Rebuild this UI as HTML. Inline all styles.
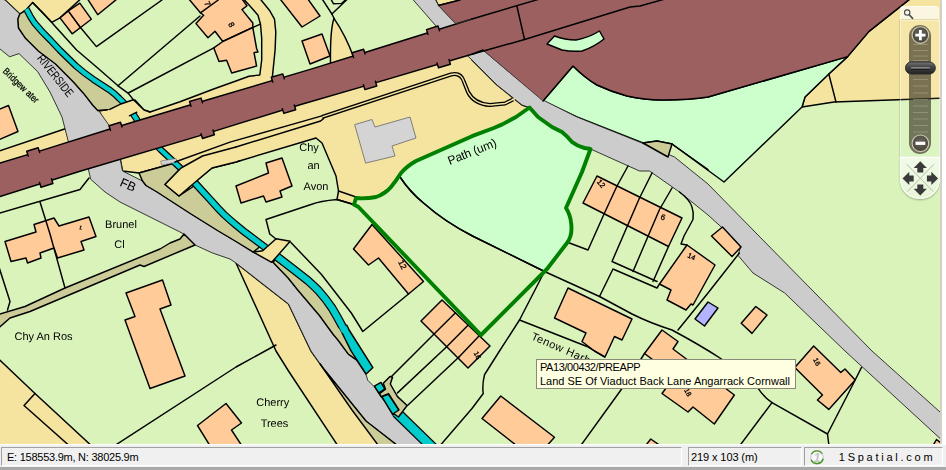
<!DOCTYPE html>
<html><head><meta charset="utf-8"><title>Map</title>
<style>
html,body{margin:0;padding:0;background:#fff;}
body{width:946px;height:470px;overflow:hidden;position:relative;font-family:"Liberation Sans",sans-serif;}
#map{position:absolute;left:0;top:0;width:940px;height:444px;display:block;will-change:transform;}
#edge{position:absolute;left:940px;top:0;width:2px;height:444px;background:#d4d0c8;}
#status{position:absolute;left:0;top:444px;width:946px;height:26px;background:#f0f0f0;border-top:1px solid #fff;box-sizing:border-box;border-bottom:3px solid #a9a9a9;}
.pan{position:absolute;top:2px;height:19px;box-sizing:border-box;border:1px solid;border-color:#a0a0a0 #fff #fff #a0a0a0;font-size:11px;line-height:19px;color:#000;white-space:nowrap;}
#tip{position:absolute;left:536px;top:359px;width:260px;height:30px;box-sizing:border-box;background:#ffffe1;border:1px solid #8a8a7a;font-size:11px;line-height:14px;padding:0 0 0 3px;color:#000;white-space:nowrap;}
#ctl{position:absolute;left:899px;top:6px;width:41px;}
#srch{position:absolute;left:1px;top:0;width:39px;height:14px;background:#fbf6e2;border:1px solid #fdfaf0;border-bottom:1px solid #e0d5a5;box-sizing:border-box;border-radius:3.5px 3.5px 0 0;}
#sld{position:absolute;left:0.5px;top:14px;width:40px;height:137px;box-sizing:border-box;background:rgba(255,255,255,0.10);border:1px solid rgba(255,255,255,0.42);box-shadow:-1px 0 0 rgba(130,110,50,0.22);}
#trk{position:absolute;left:8.6px;top:4px;width:22px;height:129px;border-radius:11px;background:rgba(62,58,42,0.68);}
#pn{position:absolute;left:0.5px;top:151px;width:40px;height:41.5px;box-sizing:border-box;background:linear-gradient(rgba(248,252,244,0.8),rgba(236,246,226,0.75));border:1px solid rgba(255,255,255,0.85);border-radius:0 0 19.5px 19.5px;box-shadow:0 1px 2px rgba(0,0,0,0.3);}
#map text{font-family:"Liberation Sans",sans-serif;fill:#000;text-rendering:geometricPrecision;}
svg text{font-family:"Liberation Sans",sans-serif;}
</style></head><body>
<svg id="map" width="940" height="444" viewBox="0 0 940 444">
<rect x="-5" y="-5" width="950" height="454" fill="#d9f3bb" stroke="none"/>
<g stroke="#000" stroke-width="1.45" stroke-linejoin="round" stroke-linecap="round">
<polygon points="-5,-5 85,-5 60,17.9 51.7,22.3 32.6,2.6 24.9,10.9 19.8,14 5,0 -5,-3" fill="#f5e4a0" />
<polygon points="-5,152.5 67.5,128 72,150 -5,172" fill="#f5e4a0" />
<polygon points="99,111 109.8,109.4 118,105 135,100 144,110 150,112 180,101.7 215,88.5 236,81 249,76.2 259.8,75 261.7,60 261.7,38.3 260.5,24.3 258,15.3 251.5,7.7 240,-5 257,-5 269.4,10.2 274.5,19.2 275.8,32 275.1,50 272,80.6 272,90 110,135" fill="#f5e4a0" />
<path d="M334,18.3 Q330,30 330.5,64 L353.5,57 Q346,36 334,18.3Z" fill="#f5e4a0" />
<polygon points="433,-5 438.5,5.5 460,0 462,-5" fill="#f5e4a0" />
<polygon points="120,158 468,50 472,60 497,85 522,105 529.5,107.5 516,117 502.3,124.4 493.8,128 472,136.2 416,161 401,173 391,187 376,197 356,198 354,204.5 337,199.5 338.5,191 336,176 322,143 316,138 236,162 212,168 200,178 179,196 165,184.5 181,168 175,163 139,173 122.5,171" fill="#f5e4a0" />
<polygon points="847.6,56.6 869,31.4 915,-5 945,-5 945,98 834,102 802,107 805,97 828.8,74" fill="#f5e4a0" />
<polygon points="236,263 288.5,304 311,351 323.5,368.5 385,449 340,449 288.5,371 276,351" fill="#f5e4a0" />
<polygon points="-5,355.5 35,393.5 95,449 -5,449" fill="#f5e4a0" />
<path d="M573,66 Q585,78 597,85 Q612,92 627,96 Q645,100 662,100 Q690,100 708,97 L847.6,56.6 L828.8,74 L805,97 L802,107 L724,182 L672,144 L657,141 L643,143 L577,117 L543,101Z" fill="#ccffcc" />
<path d="M529.5,107.5 L516,117 L502.3,124.4 L493.8,128 L472,136.2 L416,161 L401,173 L400,177 Q410,192 423.5,203 Q445,222 472.5,236 L544.5,271.5 L547,269 L567,243 L572,234 L571,222 L566,208 L582,172 L590.5,149 L584.5,148 L572,142 L562,132 L552,127 L538,117Z" fill="#ccffcc" />
<path d="M433,-5 L438.5,5.5 L456,24 L483,50 L509.5,72.5 L543,100 L577,117 L642,143 L674.5,157 L708,184 L757,234 L872,351 L945,416.5 L945,443 L845,351 L784.7,293 L753,273 L738,255.4 L740.7,246.6 L729,234 L708,215 L679.5,192 L649.5,171 L639.5,171 L590.5,149 L584.5,148 L572,142 L562,132 L552,127 L538,117 L529.5,107.5 L522,105 L497,85 L472,60 L436,26 L409,-5Z" fill="#cccccc" stroke="#222" stroke-width="0.9"/>
<path d="M-5,-3 L5,0 L19.8,14 L17.9,19 L18.5,28 L25.5,38.3 L38.3,51 L55.5,64 L73.4,82 L83.6,93.4 L92.6,105 L97.7,110.5 L99,111 L109.4,125.8 L112,135 L70,148 L62,117 L50,92 L37.7,71.7 L19,53.6 L9.6,56.8 L0,49 L-5,45Z" fill="#cccccc" stroke="#222" stroke-width="0.9"/>
<path d="M88,166 L120,158 L122.5,171 L142.5,181 L146,185.5 L157,192 L191,214 L218.3,231 L236,241.5 L253.2,252.1 L273,262.3 L288.3,278.3 L297.7,290 L319.4,315.5 L333.4,334.7 L337.9,340 L348.3,354.1 L355.7,359.4 L366.2,375 L367.7,380.2 L374.4,386.9 L379.6,395.1 L385.5,402.6 L396,417 L427,449 L402,449 L366,421 L323.5,368.5 L311,351 L288.5,304 L236,263 L230,259 L212.5,253 L195,245 L184,234 L150,217 L120,202 L105,192 L91,179.5Z" fill="#cccccc" stroke="#222" stroke-width="0.9"/>
<polygon points="19.8,14 24.9,10.9 34.5,23 51,40.8 59.6,50 76,66 93.2,79.3 109,89.6 119.4,98.5 124,104 109.8,109.4 97.7,110.5 92.6,105 83.6,93.4 73.4,82 55.5,64 38.3,51 25.5,38.3 18.5,28 17.9,19" fill="#cccc99" />
<polygon points="139,173 175,163 181,168 165,184.5 179,196 196.3,184.5 211,200.5 224,214.5 236,225 245.5,232.7 262,245 253.2,252.1 236,241.5 218.3,231 191,214 157,192 146,185.5 142.5,181" fill="#cccc99" />
<polygon points="273,262.3 277.8,257.2 293.4,269.3 308.1,280.8 318.3,290.4 332,308 343,328 352.5,347 360,362 355.7,359.4 348.3,354.1 337.9,340 333.4,334.7 319.4,315.5 297.7,290 288.3,278.3" fill="#cccc99" />
<polygon points="320,363.8 323.5,368.5 366,421 402,449 381,449 352,410" fill="#cccc99" />
<polygon points="-5,315.5 25,306.5 65,288 160,249 170,243 180,239 184,234 195,245 144,266.5 140,265 30,311.5 10,318 -5,331" fill="#cccc99" />
<polygon points="643,143 657,141 672,144 668,157" fill="#cccc99" />
<path d="M26.4,9 Q30.5,17.5 34.5,23 Q42,32 51,40.8 L59.6,50 L76,66 Q84,73 93.2,79.3 L109,89.6 Q115,94 119.4,98.5 Q127,105 133.3,114 L141.5,127" fill="none" stroke="#000" stroke-width="6.8" stroke-linecap="butt"/>
<path d="M26.4,9 Q30.5,17.5 34.5,23 Q42,32 51,40.8 L59.6,50 L76,66 Q84,73 93.2,79.3 L109,89.6 Q115,94 119.4,98.5 Q127,105 133.3,114 L141.5,127" fill="none" stroke="#00cccc" stroke-width="4.4" stroke-linecap="butt"/>
<path d="M154,142.5 L160.5,149.5 L181.5,169 L198,186.5" fill="none" stroke="#000" stroke-width="6.8" stroke-linecap="butt"/>
<path d="M154,142.5 L160.5,149.5 L181.5,169 L198,186.5" fill="none" stroke="#00cccc" stroke-width="4.4" stroke-linecap="butt"/>
<path d="M181.5,169 L196.3,184.5 L211,200.5 Q218,208.5 224,214.5 Q230,220 236,225 L245.5,232.7 L262,245 L266,248" fill="none" stroke="#000" stroke-width="7.7" stroke-linecap="butt"/>
<path d="M181.5,169 L196.3,184.5 L211,200.5 Q218,208.5 224,214.5 Q230,220 236,225 L245.5,232.7 L262,245 L266,248" fill="none" stroke="#00cccc" stroke-width="5.3" stroke-linecap="butt"/>
<path d="M268,250.5 L277.8,257.2 L293.4,269.3 L308.1,280.8 Q314,286 318.3,290.4 Q326,299 332,308 Q338,318 342.4,326.6" fill="none" stroke="#000" stroke-width="8.8" stroke-linecap="butt"/>
<polygon points="338.2,325.3 340.6,330 351.3,351.3 366.2,374.1 372.9,367.6 349.1,330 346.9,325.3" fill="#00cccc" />
<path d="M268,250.5 L277.8,257.2 L293.4,269.3 L308.1,280.8 Q314,286 318.3,290.4 Q326,299 332,308 Q338,318 342.4,326.6 L344.8,331.5" fill="none" stroke="#00cccc" stroke-width="6.4" stroke-linecap="butt"/>
<path d="M396.5,412.5 L434,449" fill="none" stroke="#000" stroke-width="11" stroke-linecap="butt"/>
<path d="M396.5,412.5 L434,449" fill="none" stroke="#00cccc" stroke-width="8.6" stroke-linecap="butt"/>
<polygon points="374.4,386.2 381,382.4 384.8,389.2 378.8,392.9" fill="#00cccc" />
<polygon points="381.8,396.6 388.5,394.4 399,410 393,415" fill="#00cccc" />
<polygon points="383.3,383.2 390,376.5 392.5,377.2 390.3,384 397.5,396.6 407.1,405.5 398.5,417 393.5,413.5 399,410 388.5,393.6 381,396.6 379.6,393.6 385.5,389.2" fill="#cccc99" />
<polygon points="108,110 120,104.3 133.4,99.8 144,110 150,112 136.2,112.4 129.8,115.6 116,121 110,118" fill="#f5e4a0" stroke="none"/>
<path d="M136.8,112.2 L129.4,115.8" fill="none" />
<path d="M109.8,109.4 L120,104.3 L133.4,99.8 L144,110 L150,112" fill="none" />
<polygon points="181,168 202.5,156 238,145.4 238,161.4 212,168 200,178 179,196 165,184.5" fill="#f5e4a0" stroke="none"/>
<path d="M240,160.8 L236,162 L212,168 L200,178 L179,196 L165,184.5 L181,168 L202.5,156 L236,147" fill="none" />
<polygon points="253.2,252.1 262.7,250.8 276.1,238.7 290.2,241.3 271.7,262.3" fill="#f5e4a0" />
<polygon points="161,161 176,158.5 177,162 162,165" fill="#d2d2d2" stroke="#666" stroke-width="0.6"/>
<path d="M-5,164.6 L0,163.1 L41,150.6 L110,129 L200,102 L310.2,69.4 L366.4,52 L472,19 L456,24 L438.5,5.5 L460,0 L462,-5 L915,-5 L869,31.4 L847.6,56.6 L708,97 Q690,100 662,100 Q645,100 627,96 Q612,92 597,85 Q585,78 573,66 L543,101 L509.5,72.5 L483,50 L472,54.3 L363.4,86.4 L300,104.7 L200,135.6 L80,171.3 L0,196.6 L-5,198.2Z" fill="#9c6060" stroke="none"/>
<path d="M-5,164.6 L0,163.1 L41,150.6 L110,129 L200,102 L310.2,69.4 L366.4,52 L472,19" fill="none" />
<path d="M483,50 L472,54.3 L363.4,86.4 L300,104.7 L200,135.6 L80,171.3 L0,196.6 L-5,198.2" fill="none" />
<path d="M438.5,5.5 L460,0 L462,-5 M915,-5 L869,31.4 L847.6,56.6 L708,97 Q690,100 662,100 Q645,100 627,96 Q612,92 597,85 Q585,78 573,66 L543,101" fill="none" />
<path d="M472,19 L456,24 L438.5,5.5 M543,101 L509.5,72.5 L483,50" fill="none" stroke="#333" stroke-width="0.8"/>
<path d="M28.2,156.1 L26.7,151.3 L38.2,147.8 L39.7,152.6" fill="#9c6060" />
<path d="M110.5,130.4 L109.0,125.7 L120.5,122.2 L122.0,127.0" fill="#9c6060" />
<path d="M191.0,106.3 L189.5,101.5 L201.0,98.1 L202.5,102.9" fill="#9c6060" />
<path d="M272.8,82.1 L271.3,77.3 L282.8,73.9 L284.3,78.7" fill="#9c6060" />
<path d="M353.6,57.6 L352.1,52.8 L363.6,49.2 L365.1,54.0" fill="#9c6060" />
<path d="M428.0,34.4 L426.5,29.6 L438.0,26.0 L439.5,30.8" fill="#9c6060" />
<path d="M39.5,182.5 L41.0,187.3 L52.9,183.5 L51.5,178.7" fill="#9c6060" />
<path d="M201.0,133.7 L202.5,138.5 L214.4,134.8 L213.0,130.0" fill="#9c6060" />
<path d="M282.3,108.6 L283.8,113.4 L295.7,109.7 L294.3,104.9" fill="#9c6060" />
<path d="M363.4,84.8 L364.9,89.6 L376.8,86.0 L375.4,81.3" fill="#9c6060" />
<path d="M437.0,63.0 L438.5,67.8 L450.4,64.3 L449.0,59.5" fill="#9c6060" />
<path d="M472,19.0 L543,-2" fill="none" />
<path d="M517,6.5 L524.5,39.5" fill="none" />
<path d="M472,54.3 L524.5,39.5 L630,7 L640,6 L665,-1" fill="none" />
<path d="M547,44 L554.5,36 Q565,40 576,40 Q588,38 599.5,31 L604,39 Q594,47 582,51 Q572,52 562,50Z" fill="#ccffcc" />
<text transform="translate(530.6,339) rotate(23.5)" font-size="11" stroke="none" textLength="80.5" lengthAdjust="spacing">Tenow Harbour</text>
<polygon points="60,17.9 68.3,10.9 80.5,27.5 72.2,33.8" fill="#ffcc99" />
<polygon points="68.3,10.9 79.8,3.2 91.3,19.2 80.5,27.5" fill="#ffcc99" />
<polygon points="85,-5 97.7,14.7 119.5,-3" fill="#ffcc99" />
<polygon points="185.5,-5 200.4,12.8 203.6,15.3 196,23.6 208,37.7 215,31.3 222.8,41.5 252.8,27.5 252.8,23 242,9.6 247,5.7 239,-5" fill="#ffcc99" />
<polygon points="213.8,47.9 222.8,41.5 252.8,27.5 256.6,48.5 258,52 254,52.6 256.6,66 231.7,73 226.6,60.2 219,61.5" fill="#ffcc99" />
<polygon points="277,-5 302,27 320,16 305,-5" fill="#ffcc99" />
<polygon points="302,41 322,34 330,56 310,64" fill="#ffcc99" />
<polygon points="-5,111 8.5,105.5 18,131.5 -5,141.5" fill="#ffcc99" />
<polygon points="34,224.5 54,218 59,226 89,217 96,236.5 81,241.5 84,250 57.5,258 54,248 40,253 41,258 27.5,263 26,258 11,261.5 5,241.5 36,232" fill="#ffcc99" />
<polygon points="236,186 268.5,173 266,163 282,158 292,186 280,191 282,197 266,202 263.5,196 241,203" fill="#ffcc99" />
<polygon points="126,293 162.5,280 171,305 160,309 185,376 150,388.5 125,320 135,316.5" fill="#ffcc99" />
<polygon points="197.5,425.5 226,403.5 241.5,423 231.5,430 244,449 212,449" fill="#ffcc99" />
<polygon points="353.5,249 372,224.5 423.5,281.5 408.5,294 378.5,258 368.5,265" fill="#ffcc99" />
<polygon points="442,300 490,346 468,368 421,321" fill="#ffcc99" />
<polygon points="597,176 682,218 668.5,246.5 583,203" fill="#ffcc99" />
<polygon points="687,245 715,265 693,305 691,304 686,310 667,300 671,290 659.5,284" fill="#ffcc99" />
<polygon points="711.5,236 722.5,227 741,247 732,256.5" fill="#ffcc99" />
<polygon points="755.8,306.5 767,315 752,333.4 741.2,323.3" fill="#ffcc99" />
<polygon points="568,288 632,319 622,340 614.5,336.5 605,357 594.5,351 582,341.5 586,333 554.5,318" fill="#ffcc99" />
<polygon points="662,330 678,341.5 673,349 734.4,395 714.3,424 693,407 688,412 662,393.5 675,376.3 644.5,353.5" fill="#ffcc99" />
<polygon points="813.7,346 794.8,367.4 822.5,395 817.4,400 828.8,409.4 855.2,380 845,369 840.8,372.4" fill="#ffcc99" />
<polygon points="482,418.5 500.75,396 554.5,437.25 544,449 521,449" fill="#ffcc99" />
<polygon points="643,449 650.75,439 665,449" fill="#ffcc99" />
<polygon points="931,449 936.5,439.5 941,443 941,449" fill="#ffcc99" />
<polygon points="695,319 708,302 718,308 704.5,326" fill="#b3b3ff" />
<polygon points="355,124.5 372,119.5 375,127 410,117 416,138 392,146 395,156 366,163" fill="#d4d4d4" stroke="#666" stroke-width="0.8"/>
<path d="M32.6,2.6 L44,14 L76.6,50 L97.7,68 L118,85.8 L128.3,93.4 L133.4,99.8" fill="none" />
<path d="M80.5,27.5 L96.4,46.6 L162,0" fill="none" />
<path d="M118,85.8 L200,16" fill="none" />
<path d="M128.3,93 L213.8,47.9" fill="none" />
<path d="M252.8,27.5 L259.8,24.3" fill="none" />
<path d="M200.4,12.8 L218.3,0" fill="none" />
<path d="M321.5,-2 L331.9,14 L334,18.3" fill="none" />
<path d="M331.9,14 L348,-1.5" fill="none" />
<path d="M330.5,-1.5 L333.6,3.8 L341.7,3.4 L347,-1.5" fill="none" />
<path d="M-2,213.5 L80,189.5 L89,178" fill="none" />
<path d="M40,202 L50,234 L65,288" fill="none" />
<path d="M-2,264 L10,301.5 L7.5,310" fill="none" />
<path d="M353.5,204.5 L337,199.5 Q320,201 311,204.5 L266,219.5 L269.75,234 L276,239" fill="none" />
<path d="M338.5,191 L356,197" fill="none" />
<path d="M400,177 Q410,192 423.5,203 Q445,222 472.5,236 L544.5,271.5 L599.5,296.5 L632,314 Q650,323 672,330 Q700,345 720.7,358.5 L758.3,388.7 Q764,397 772,402.6 L827.5,434 L829,446" fill="none" />
<path d="M544.5,271.5 L519.5,320 L499.5,351 L484.5,374.75 Q482,385 483.25,393.5 L472,408.5 L438,448" fill="none" />
<path d="M519.5,320 L587,346.5 L604.5,357" fill="none" />
<path d="M290.9,242.5 L321.5,274.5 L351.3,313 L362.8,331.5 L408.5,294" fill="none" />
<path d="M433.8,334.3 L391.5,376.5" fill="none" />
<path d="M446.4,347 L397.5,392.9" fill="none" />
<path d="M459,357 L407.5,405.5" fill="none" />
<path d="M455.5,312.7 L433.8,334.3 M468,325.3 L446.4,347 M479,336 L459,357" fill="none" />
<path d="M111,448 L236,367 L276,345" fill="none" />
<path d="M35,393.5 L24,405.5 L73,449" fill="none" />
<path d="M679.5,192 Q690,200 692,207 Q694,213 693,219.5 L684,236 L681,244 L687,245" fill="none" />
<path d="M628,166 L617,186 L604.5,213 L588,250 L569.5,243" fill="none" />
<path d="M652,173 L639.5,198 L612,261.5 L657,281.5" fill="none" />
<path d="M672,188 L659.5,209.5 L633,271.5" fill="none" />
<path d="M668.5,246.5 L653,281.5" fill="none" />
<path d="M613,269 L599.5,296.5 M613,269 L657,288 L659.5,284" fill="none" />
<path d="M739.4,253 L708,293 L678,330" fill="none" />
<path d="M644.5,353.5 L622,388.5 L579,448" fill="none" />
<path d="M861.5,367.4 L855.2,380 L827.5,434" fill="none" />
<path d="M772,402.6 L738,448" fill="none" />
<path d="M828.8,74 L836,102" fill="none" />
<path d="M672,144 L708,169.5" fill="none" />
<path d="M322,117 L451,74.5 Q461,72 464,82 L468,92 Q474,104 490,105 L505,103.5 L513,99.5" fill="none" stroke="#000" stroke-width="4" stroke-linecap="butt"/>
<path d="M320,117.6 L451,74.5 Q461,72 464,82 L468,92 Q474,104 490,105 L505,103.5 L515,98.5" fill="none" stroke="#f5e4a0" stroke-width="1.4" stroke-linecap="butt"/>
<path d="M175,162 L230,142.1 L321.9,115.9" fill="none" />
<path d="M236,147 L320.6,121 L323.5,118.6" fill="none" />
<path d="M358.5,207 L481,335 L547,269 L567,243 Q573,235 571,222 Q570,214 566,208 L582,172 L590.5,149 L584.5,148 Q577,146 572,142 Q567,136 562,132 L552,127 L538,117 L529.5,107.5 L516,117 L502.3,124.4 L493.8,128 L472,136.2 L416,161 Q407,166 401,173 Q396,181 391,187 Q385,194 376,197 Q366,199 356,198 L354,204.5 Z" fill="none" stroke="#008000" stroke-width="3.9" stroke-linejoin="round"/>
<g stroke="none" font-size="11">
<text transform="translate(36.5,58.4) rotate(51.6)" font-size="12" textLength="50.5" lengthAdjust="spacingAndGlyphs">RIVERSIDE</text>
<text transform="translate(2.2,71.8) rotate(44)" stroke="#000" stroke-width="0.25" font-size="9.5" textLength="46" lengthAdjust="spacingAndGlyphs">Bridgew ater</text>
<text transform="translate(119,185.5) rotate(24)" font-size="12.5">FB</text>
<text x="121" y="227.8" text-anchor="middle">Brunel</text>
<text x="119.5" y="247.5" text-anchor="middle">Cl</text>
<text x="309" y="150.5" text-anchor="middle">Chy</text>
<text x="313.5" y="169" text-anchor="middle">an</text>
<text x="316" y="190" text-anchor="middle">Avon</text>
<text x="14.5" y="339.8">Chy An Ros</text>
<text x="272.75" y="405.5" text-anchor="middle">Cherry</text>
<text x="274.5" y="426.5" text-anchor="middle">Trees</text>
<text transform="translate(449.7,165) rotate(-21.9)" font-size="12" textLength="51.5" lengthAdjust="spacing">Path (um)</text>
<text stroke="#000" stroke-width="0.3" transform="translate(596.5,182) rotate(50)" font-size="7.5">12</text>
<text stroke="#000" stroke-width="0.3" transform="translate(660,219) rotate(20)" font-size="8">6</text>
<text stroke="#000" stroke-width="0.3" transform="translate(687,257) rotate(25)" font-size="7">14</text>
<text stroke="#000" stroke-width="0.3" transform="translate(398,262) rotate(62)" font-size="8">12</text>
<text stroke="#000" stroke-width="0.3" transform="translate(473.5,353) rotate(62)" font-size="7">16</text>
<text stroke="#000" stroke-width="0.3" transform="translate(813,359.5) rotate(62)" font-size="7">16</text>
<text stroke="#000" stroke-width="0.3" transform="translate(684,390) rotate(62)" font-size="7">18</text>
<text stroke="#000" stroke-width="0.3" transform="translate(204,3) rotate(62)" font-size="8">7</text>
<text stroke="#000" stroke-width="0.3" transform="translate(228,24) rotate(62)" font-size="8">8</text>
<text stroke="#000" stroke-width="0.3" transform="translate(79,229) rotate(10)" font-size="5">1</text>
</g>
</g>
</svg>
<div id="ctl">
<div id="srch"><svg width="14" height="14" viewBox="0 0 14 14" style="position:absolute;left:1px;top:0px"><circle cx="5.2" cy="5.6" r="2.7" fill="none" stroke="#4a4a4a" stroke-width="1.1"/><path d="M7.2,7.8 L10.6,11.4" stroke="#4a4a4a" stroke-width="1.6" stroke-linecap="round"/></svg></div>
<div id="sld">
<div id="trk"></div>
<svg width="41" height="138" viewBox="0 0 41 138" style="position:absolute;left:-1px;top:-1px">
<defs><linearGradient id="hg" x1="0" y1="0" x2="0" y2="1"><stop offset="0" stop-color="#7a7a7a"/><stop offset="0.35" stop-color="#4a4a4a"/><stop offset="1" stop-color="#222"/></linearGradient>
<radialGradient id="bg" cx="0.5" cy="0.4" r="0.6"><stop offset="0" stop-color="#6a675c"/><stop offset="1" stop-color="#45433a"/></radialGradient></defs>
<g stroke="#b3ad92" stroke-width="0.9" opacity="0.55">
<path d="M13,24.5H28M13,30.5H28M13,36H28M13,40.5H28M13,59.5H28M13,66H28M13,73H28M13,79.5H28M13,86H28M13,92.5H28M13,99H28M13,105.5H28M13,112H28"/>
</g>
<circle cx="20.4" cy="15.1" r="8.3" fill="url(#bg)" stroke="#cfcab2" stroke-width="1.1"/>
<path d="M20.4,10V20.2M15.3,15.1H25.5" stroke="#fff" stroke-width="2.8"/>
<circle cx="20.4" cy="123.3" r="8.3" fill="url(#bg)" stroke="#cfcab2" stroke-width="1.1"/>
<path d="M15.5,123.3H25.3" stroke="#fff" stroke-width="3.2"/>
<rect x="5.5" y="42" width="29.8" height="12" rx="5.8" fill="url(#hg)" stroke="#2b2b2b" stroke-width="1"/>
<path d="M11.5,48H29.3" stroke="#c8c8c8" stroke-width="1.1" stroke-linecap="round"/>
<path d="M11.5,49.2H29.3" stroke="#111" stroke-width="0.9" stroke-linecap="round"/>
</svg>
</div>
<div id="pn"><svg width="40" height="42" viewBox="0 0 40 42" style="position:absolute;left:-1px;top:-1px">
<path d="M6.8,7.3 L33.2,34.6 M33.8,7.3 L7.4,34.6" stroke="#a9ae9f" stroke-width="0.8"/>
<g fill="#3a3a3a">
<path d="M20.3,4.2 L26.9,11 H23.3 V15.4 H17.3 V11 H13.7Z"/>
<path d="M20.3,38.6 L26.9,31.8 H23.3 V27.4 H17.3 V31.8 H13.7Z"/>
<path d="M2.5,21.4 L9.3,14.8 V18.4 H13.7 V24.4 H9.3 V28Z"/>
<path d="M38.1,21.4 L31.3,14.8 V18.4 H26.9 V24.4 H31.3 V28Z"/>
</g></svg></div>
</div>
<div id="edge"></div>
<div id="tip"><span style="letter-spacing:-0.42px">PA13/00432/PREAPP</span><br>Land SE Of Viaduct Back Lane Angarrack Cornwall</div>
<div id="status">
<div class="pan" style="left:1px;width:681px;padding-left:5px;letter-spacing:-0.25px;">E: 158553.9m, N: 38025.9m</div>
<div class="pan" style="left:688px;width:114px;padding-left:2px;letter-spacing:-0.1px;">219 x 103 (m)</div>
<div class="pan" style="left:804px;width:139px;"><svg width="18" height="18" viewBox="0 0 18 18" style="position:absolute;left:3px;top:0px"><circle cx="9" cy="9.2" r="6.3" fill="#fafafa" stroke="#c9c9c9" stroke-width="1.2"/><path d="M3.4,6.2 A6.3,6.3 0 0 1 14.2,5.6" fill="none" stroke="#4a9a2a" stroke-width="1.3"/><path d="M15.1,10.8 A6.3,6.3 0 0 1 3.2,11.8" fill="none" stroke="#4a9a2a" stroke-width="1.6"/><text x="5.4" y="13.6" font-size="12.5" font-style="italic" font-weight="bold" fill="#c6c6c6" style="fill:#c6c6c6">1</text></svg><span style="position:absolute;left:33.8px;top:0;letter-spacing:2.75px;">1Spatial.com</span></div>
</div>
</body></html>
